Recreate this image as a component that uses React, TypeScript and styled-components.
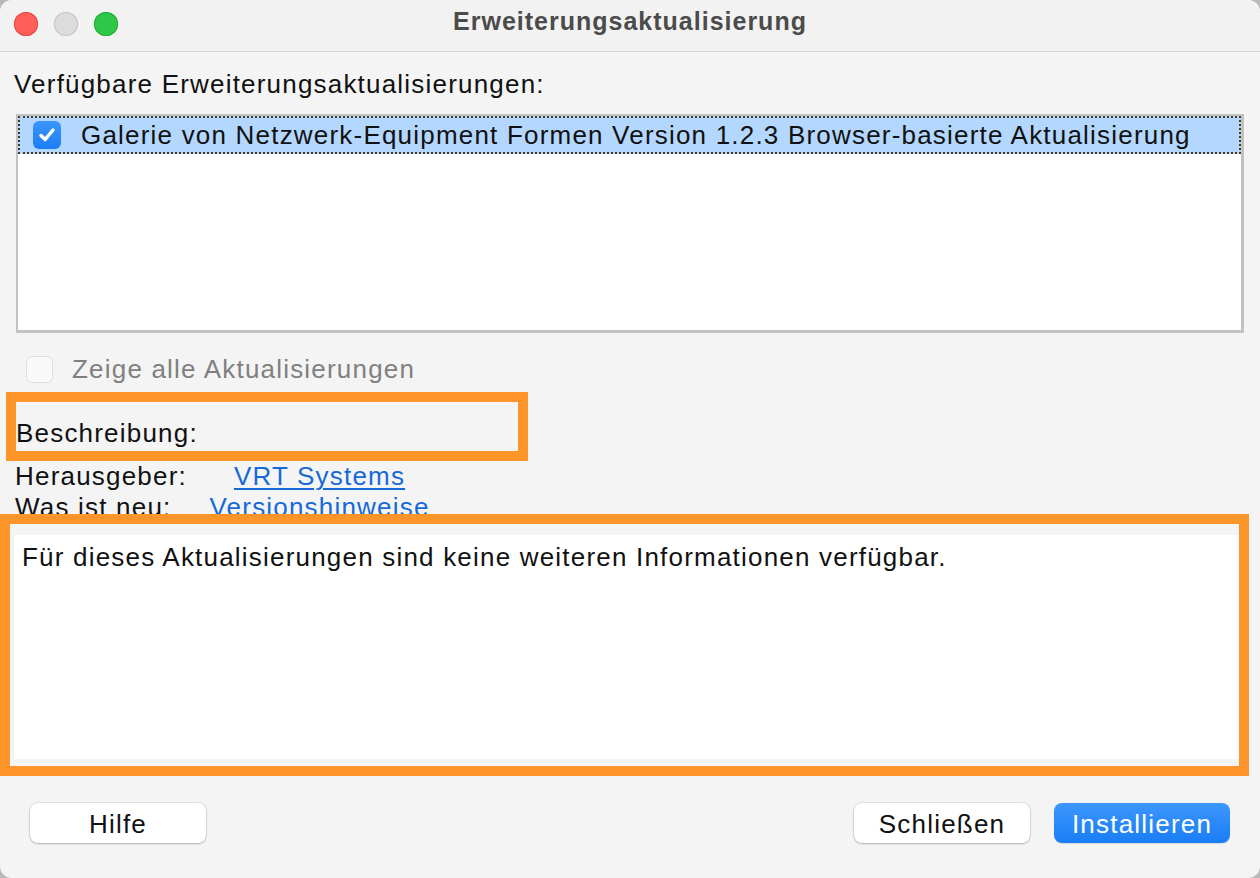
import React from 'react';
import styled, { createGlobalStyle } from 'styled-components';

const GlobalStyle = createGlobalStyle`
  html, body {
    margin: 0;
    padding: 0;
    background: #b9b9b9;
  }
  body {
    font-family: "Liberation Sans", Arial, sans-serif;
    font-size: 26px;
    letter-spacing: 1.2px;
    color: #111;
  }
`;

const updates = [
  {
    id: 1,
    checked: true,
    label: 'Galerie von Netzwerk-Equipment Formen Version 1.2.3 Browser-basierte Aktualisierung',
  },
];

const Window = styled.div`
  width: 1260px;
  height: 878px;
  background: #f4f4f4;
  border-radius: 12px;
  overflow: hidden;
  display: flex;
  flex-direction: column;
`;

const TitleBar = styled.div`
  height: 52px;
  flex: none;
  display: grid;
  grid-template-columns: 1fr auto 1fr;
  align-items: center;
  padding-bottom: 4px;
  background: #f2f2f2;
  border-bottom: 1px solid #d3d3d3;
  box-sizing: border-box;
`;

const Lights = styled.div`
  display: flex;
  gap: 16px;
  padding-left: 14px;
`;

const Light = styled.span<{ $fill: string; $ring: string }>`
  width: 24px;
  height: 24px;
  border-radius: 50%;
  background: ${(p) => p.$fill};
  box-shadow: inset 0 0 0 1px ${(p) => p.$ring};
`;

const Title = styled.div`
  font-size: 25px;
  letter-spacing: 1px;
  font-weight: 700;
  color: #4b4b4b;
  padding-bottom: 4px;
`;

const Body = styled.div`
  flex: 1;
  display: flex;
  flex-direction: column;
`;

const Label = styled.div`
  line-height: 28px;
  padding-left: 14px;
  margin-top: 18px;
`;

const ListBox = styled.div`
  margin: 16px 16px 0 16px;
  height: 219px;
  box-sizing: border-box;
  background: #fff;
  border: 2px solid #c2c2c2;
  border-bottom-width: 3px;
  border-right-width: 3px;
`;

const Row = styled.div<{ $selected?: boolean }>`
  height: 38px;
  box-sizing: border-box;
  display: flex;
  align-items: center;
  gap: 20px;
  padding-left: 13px;
  background: ${(p) => (p.$selected ? '#b3d7ff' : 'transparent')};
  border: 2px dotted ${(p) => (p.$selected ? '#4a3a20' : 'transparent')};
  color: #111;
  white-space: nowrap;
`;

const CheckBox = styled.span<{ $size: number; $disabled?: boolean; $checked?: boolean }>`
  width: ${(p) => p.$size}px;
  height: ${(p) => p.$size}px;
  flex: none;
  box-sizing: border-box;
  border-radius: 6px;
  display: flex;
  align-items: center;
  justify-content: center;
  background: ${(p) =>
    p.$checked ? 'linear-gradient(#3b95fb, #1c7ef5)' : p.$disabled ? '#f9f9f9' : '#fff'};
  border: ${(p) => (p.$checked ? 'none' : '1px solid #dfdfdf')};
`;

const ShowAllRow = styled.div`
  margin-top: 22px;
  padding-left: 26px;
  display: flex;
  align-items: center;
  gap: 19px;
  color: #808080;
  height: 28px;
`;

const Highlight = styled.div`
  border: 10px solid #fd952a;
  box-sizing: border-box;
`;

const DescHead = styled(Highlight)`
  margin: 9px 0 0 6px;
  width: 522px;
  height: 69px;
  padding: 17px 0 0 0;
  line-height: 28px;
`;

const Meta = styled.div`
  height: 53px;
  overflow: hidden;
  padding-left: 15px;
`;

const MetaRow = styled.div<{ $gap: number }>`
  display: flex;
  height: 31px;
  align-items: center;
  gap: ${(p) => p.$gap}px;
`;

const Link = styled.a<{ $underline?: boolean }>`
  color: #1769d8;
  text-decoration: ${(p) => (p.$underline ? 'underline' : 'none')};
  text-underline-offset: 3px;
  text-decoration-thickness: 2px;
`;

const InfoFrame = styled(Highlight)`
  width: 1249px;
  height: 262px;
  padding: 11px 0 7px 4px;
  display: flex;
`;

const InfoPanel = styled.div`
  flex: 1;
  background: #fff;
  padding: 7px 8px;
  line-height: 30px;
`;

const Footer = styled.div`
  margin-top: 27px;
  padding: 0 30px;
  display: flex;
  align-items: center;
  gap: 24px;
`;

const Spacer = styled.div`
  flex: 1;
`;

const Button = styled.button<{ $primary?: boolean }>`
  width: 176px;
  height: 40px;
  border-radius: 8px;
  border: none;
  font-family: inherit;
  font-size: 26px;
  letter-spacing: 1.2px;
  padding: 3px 0 0;
  color: ${(p) => (p.$primary ? '#fff' : '#111')};
  background: ${(p) => (p.$primary ? 'linear-gradient(#3c97fc, #1a7df5)' : '#fff')};
  box-shadow: ${(p) =>
    p.$primary
      ? '0 1px 1px rgba(0,0,0,0.12)'
      : '0 0 0 1px rgba(0,0,0,0.08), 0 1px 2px rgba(0,0,0,0.22)'};
`;

const Check = () => (
  <svg width="20" height="20" viewBox="0 0 20 20">
    <path
      d="M4 10.5 L8.2 14.5 L16 5"
      fill="none"
      stroke="#fff"
      strokeWidth="3.4"
      strokeLinecap="round"
      strokeLinejoin="round"
    />
  </svg>
);

export default function App() {
  return (
    <>
      <GlobalStyle />
      <Window>
        <TitleBar>
          <Lights>
            <Light $fill="#fe5f57" $ring="#e2463f" />
            <Light $fill="#dcdcdc" $ring="#c4c4c4" />
            <Light $fill="#30c748" $ring="#1ea934" />
          </Lights>
          <Title>Erweiterungsaktualisierung</Title>
          <div />
        </TitleBar>
        <Body>
          <Label>Verfügbare Erweiterungsaktualisierungen:</Label>
          <ListBox>
            {updates.map((u) => (
              <Row key={u.id} $selected>
                <CheckBox $size={28} $checked={u.checked}>
                  {u.checked && <Check />}
                </CheckBox>
                <span>{u.label}</span>
              </Row>
            ))}
          </ListBox>
          <ShowAllRow>
            <CheckBox $size={27} $disabled />
            <span>Zeige alle Aktualisierungen</span>
          </ShowAllRow>
          <DescHead>Beschreibung:</DescHead>
          <Meta>
            <MetaRow $gap={47}>
              <span>Herausgeber:</span>
              <Link href="#" $underline>
                VRT Systems
              </Link>
            </MetaRow>
            <MetaRow $gap={38}>
              <span>Was ist neu:</span>
              <Link href="#">Versionshinweise</Link>
            </MetaRow>
          </Meta>
          <InfoFrame>
            <InfoPanel>Für dieses Aktualisierungen sind keine weiteren Informationen verfügbar.</InfoPanel>
          </InfoFrame>
          <Footer>
            <Button>Hilfe</Button>
            <Spacer />
            <Button>Schließen</Button>
            <Button $primary>Installieren</Button>
          </Footer>
        </Body>
      </Window>
    </>
  );
}
